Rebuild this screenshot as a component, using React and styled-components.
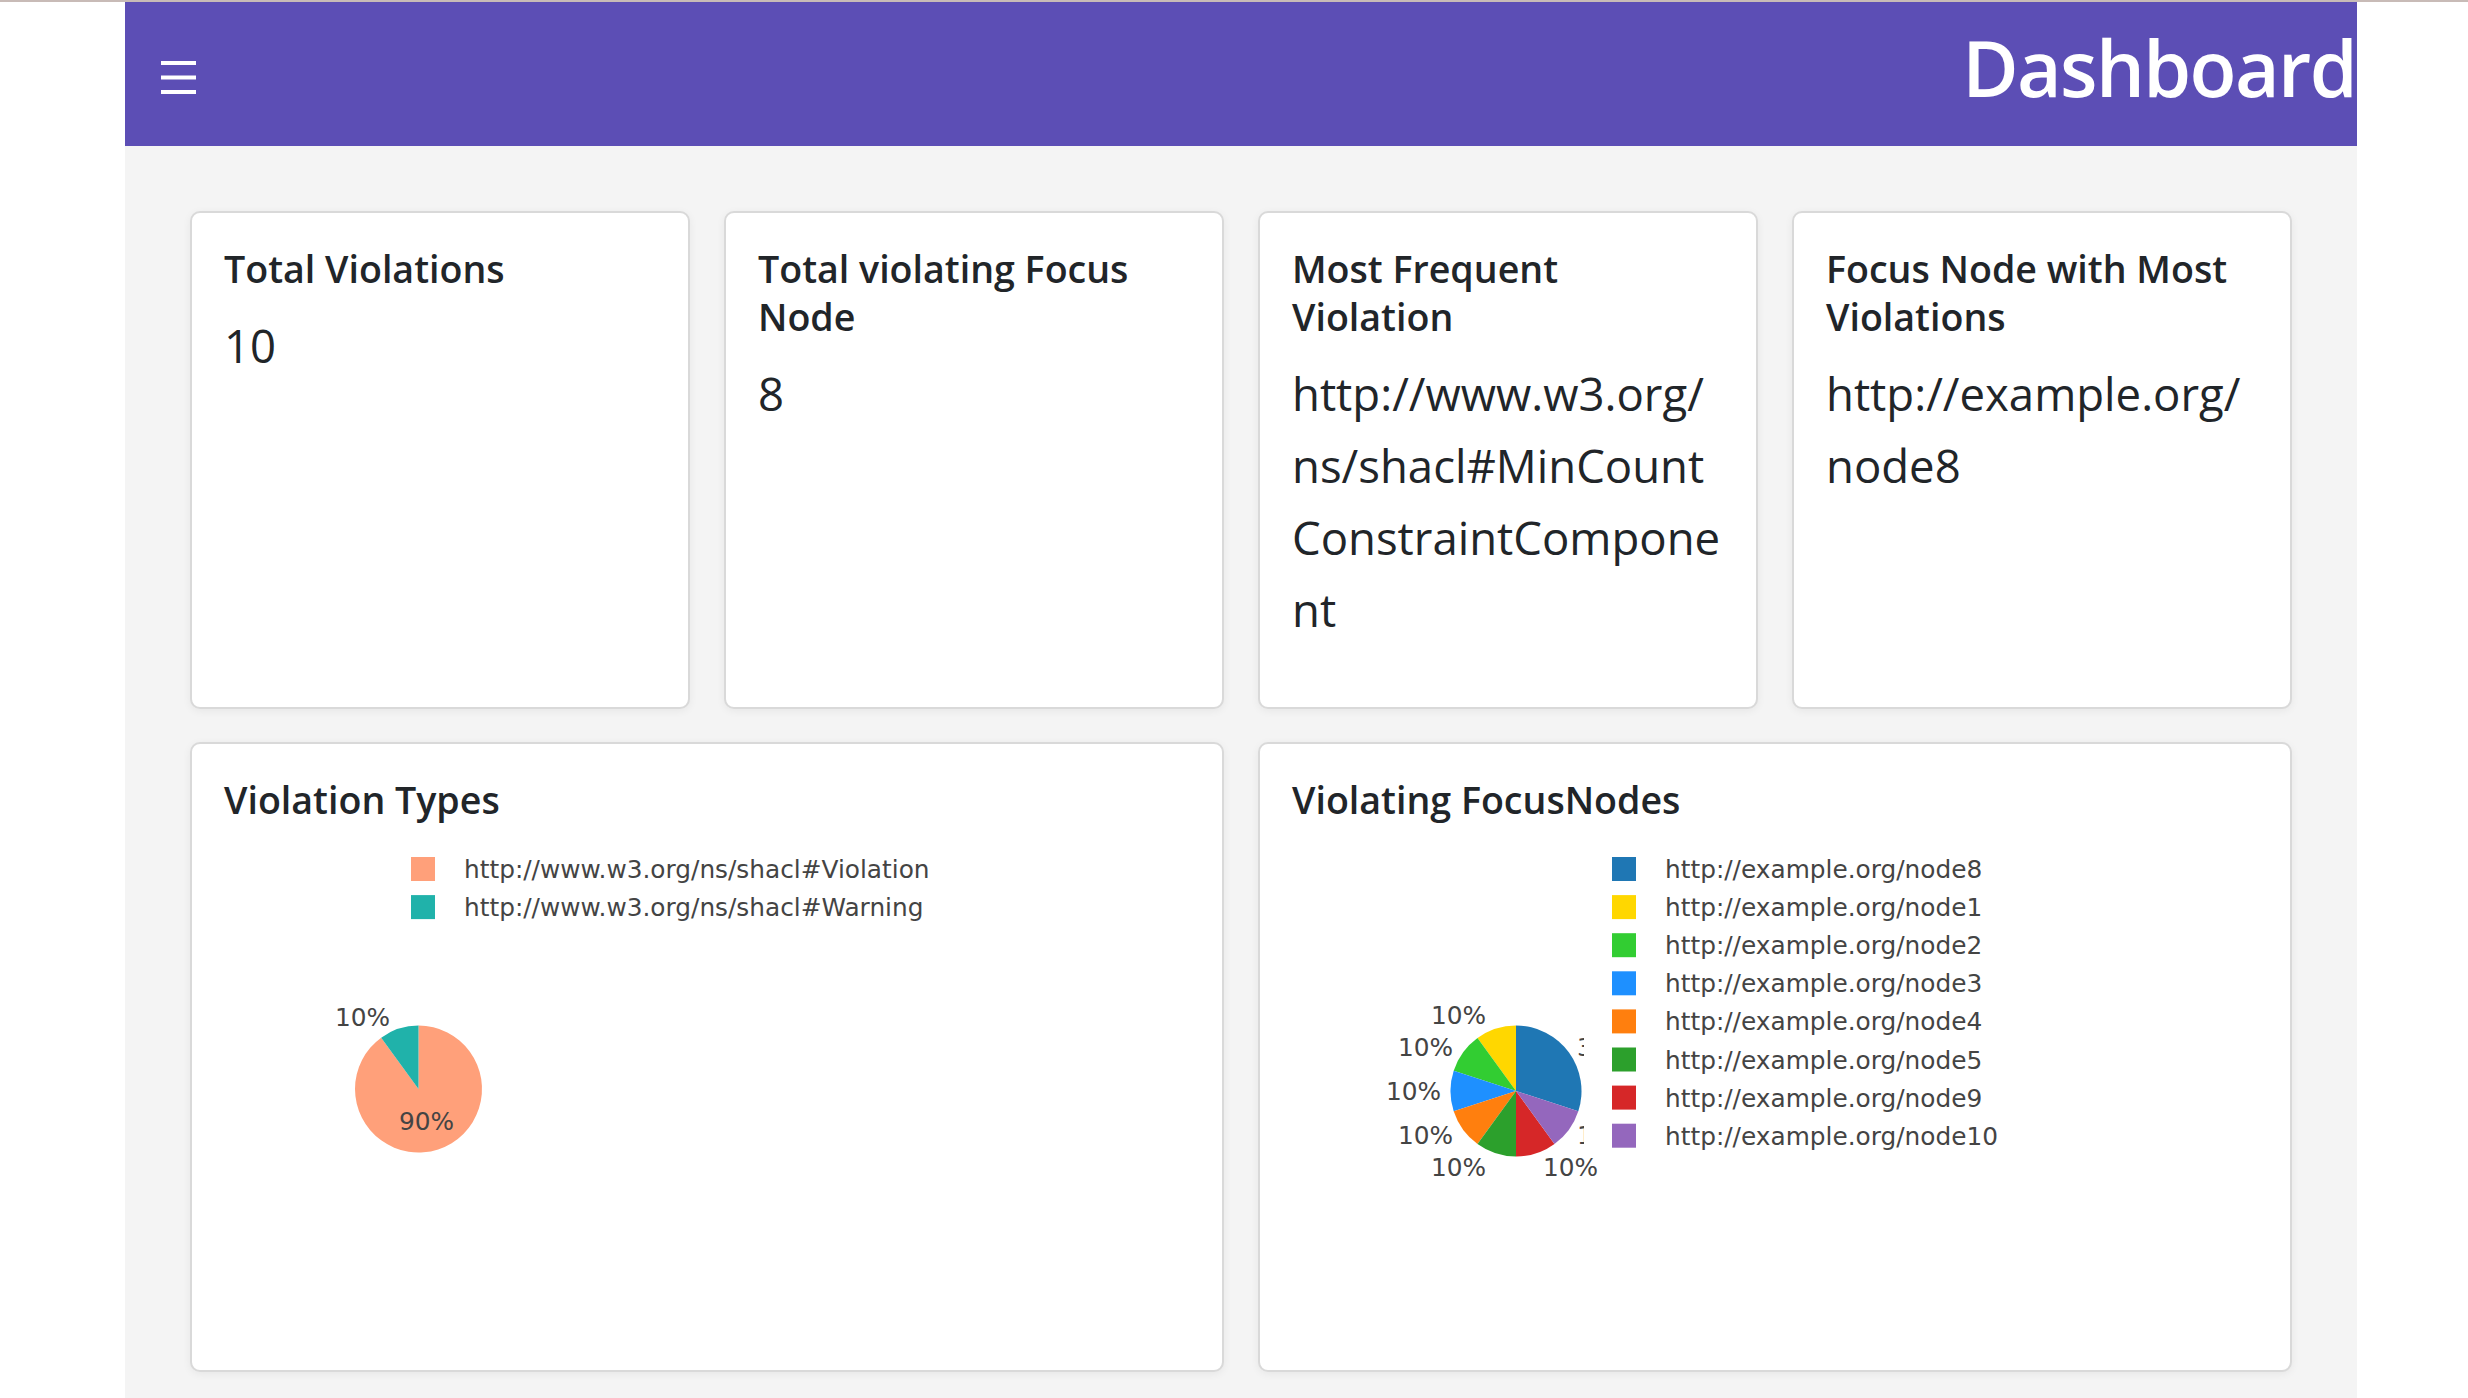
import React from 'react';
import styled, { createGlobalStyle } from 'styled-components';

const GlobalStyle = createGlobalStyle`
  html, body { margin: 0; padding: 0; }
  body {
    background: #ffffff;
    border-top: 2px solid #c8bbb7;
    font-family: "Open Sans", "Noto Sans", sans-serif;
    color: #212529;
  }
`;

const Page = styled.div`
  margin-left: 125px;
  width: 2232px;
  min-height: calc(100vh - 2px);
  background: #f4f4f4;
`;

const Header = styled.header`
  height: 144px;
  box-sizing: border-box;
  background: #5c4eb5;
  display: flex;
  align-items: center;
  justify-content: space-between;
  padding: 0 1px 0 36px;
`;

const MenuButton = styled.button`
  border: 0;
  background: none;
  padding: 0;
  margin-top: 6px;
  width: 36px;
  height: 33px;
  display: flex;
  cursor: pointer;
`;

const HeaderTitle = styled.h1`
  margin: 0 0 12px;
  font-size: 77px;
  line-height: 96px;
  font-weight: 600;
  color: #ffffff;
  letter-spacing: -1.6px;
`;

const Main = styled.main`
  padding: 65px 65px 24px;
  display: grid;
  grid-template-columns: repeat(4, 1fr);
  column-gap: 34px;
  row-gap: 33px;
`;

const Card = styled.section`
  grid-column: span ${p => p.$span || 1};
  height: ${p => (p.$tall ? 630 : 498)}px;
  box-sizing: border-box;
  background: #ffffff;
  border: 2px solid #d9d9d9;
  border-radius: 10px;
  box-shadow: 0 2px 8px rgba(0, 0, 0, 0.06);
  padding: 32px;
  overflow: hidden;
`;

const CardTitle = styled.h5`
  margin: 0 0 16px;
  font-size: 37.6px;
  line-height: 48px;
  font-weight: 600;
  color: #212529;
`;

const CardValue = styled.p`
  margin: 0;
  font-size: 45.5px;
  line-height: 72px;
  font-weight: 400;
  color: #212529;
  white-space: nowrap;
`;

const ChartSvg = styled.svg`
  display: block;
  width: 100%;
  height: 498px;
  font-family: "DejaVu Sans", Verdana, sans-serif;
  font-size: 24.8px;
`;

const rad = a => (a * Math.PI) / 180;
const pt = (cx, cy, r, a) => [cx + r * Math.sin(rad(a)), cy - r * Math.cos(rad(a))];
const slicePath = (cx, cy, r, a0, a1) => {
  const [x0, y0] = pt(cx, cy, r, a0);
  const [x1, y1] = pt(cx, cy, r, a1);
  const large = a1 - a0 > 180 ? 1 : 0;
  return `M${cx},${cy} L${x0},${y0} A${r},${r} 0 ${large} 1 ${x1},${y1} Z`;
};

function Pie({ cx, cy, r, slices }) {
  return (
    <g>
      {slices.map((s, i) => (
        <path key={i} d={slicePath(cx, cy, r, s.from, s.to)} fill={s.color} />
      ))}
    </g>
  );
}

function Legend({ x, items }) {
  return (
    <g>
      {items.map((it, i) => (
        <g key={it.label} transform={`translate(${x}, ${17 + i * 38.1})`}>
          <rect x="0" y="0" width="24" height="24" fill={it.color} />
          <text x="53" y="21" fill="#444">{it.label}</text>
        </g>
      ))}
    </g>
  );
}

function Labels({ items }) {
  return (
    <g fill="#444">
      {items.map((l, i) => (
        <text key={i} x={l.x} y={l.y}>{l.t}</text>
      ))}
    </g>
  );
}

const violationTypes = [
  { label: 'http://www.w3.org/ns/shacl#Violation', color: '#FFA07A' },
  { label: 'http://www.w3.org/ns/shacl#Warning', color: '#20B2AA' },
];

const focusNodes = [
  { label: 'http://example.org/node8', color: '#1F77B4' },
  { label: 'http://example.org/node1', color: '#FFD700' },
  { label: 'http://example.org/node2', color: '#32CD32' },
  { label: 'http://example.org/node3', color: '#1E90FF' },
  { label: 'http://example.org/node4', color: '#FF7F0E' },
  { label: 'http://example.org/node5', color: '#2CA02C' },
  { label: 'http://example.org/node9', color: '#D62728' },
  { label: 'http://example.org/node10', color: '#9467BD' },
];

const typeSlices = [
  { from: 0, to: 324, color: violationTypes[0].color },
  { from: 324, to: 360, color: violationTypes[1].color },
];

const nodeSlices = [
  { from: 0, to: 108, color: focusNodes[0].color },
  ...focusNodes.slice(1).map((n, i) => ({ from: 360 - 36 * (i + 1), to: 360 - 36 * i, color: n.color })),
];

const typeLabels = [
  { t: '10%', x: 111, y: 186 },
  { t: '90%', x: 175, y: 290 },
];

const nodeLabels = [
  { t: '10%', x: 139, y: 184 },
  { t: '10%', x: 106, y: 216 },
  { t: '10%', x: 94, y: 260 },
  { t: '10%', x: 106, y: 304 },
  { t: '10%', x: 139, y: 336 },
  { t: '10%', x: 251, y: 336 },
  { t: '30%', x: 285, y: 216 },
  { t: '10%', x: 285, y: 304 },
];

function MenuIcon() {
  return (
    <svg width="36" height="33" viewBox="0 0 36 33">
      <rect x="0" y="0" width="35" height="4" fill="#fff" />
      <rect x="0" y="14.5" width="35" height="4" fill="#fff" />
      <rect x="0" y="29" width="35" height="4" fill="#fff" />
    </svg>
  );
}

function Lines({ lines }) {
  return lines.map((l, i) => (
    <React.Fragment key={i}>
      {l}
      {i < lines.length - 1 && <br />}
    </React.Fragment>
  ));
}

export default function App() {
  return (
    <>
      <GlobalStyle />
      <Page>
        <Header>
          <MenuButton aria-label="menu">
            <MenuIcon />
          </MenuButton>
          <HeaderTitle>Dashboard</HeaderTitle>
        </Header>
        <Main>
          <Card>
            <CardTitle>Total Violations</CardTitle>
            <CardValue>10</CardValue>
          </Card>
          <Card>
            <CardTitle>Total violating Focus Node</CardTitle>
            <CardValue>8</CardValue>
          </Card>
          <Card>
            <CardTitle>Most Frequent Violation</CardTitle>
            <CardValue>
              <Lines lines={['http://www.w3.org/', 'ns/shacl#MinCount', 'ConstraintCompone', 'nt']} />
            </CardValue>
          </Card>
          <Card>
            <CardTitle>Focus Node with Most Violations</CardTitle>
            <CardValue>
              <Lines lines={['http://example.org/', 'node8']} />
            </CardValue>
          </Card>
          <Card $span={2} $tall>
            <CardTitle>Violation Types</CardTitle>
            <ChartSvg>
              <Pie cx={194.5} cy={249} r={63.5} slices={typeSlices} />
              <Labels items={typeLabels} />
              <Legend x={187} items={violationTypes} />
            </ChartSvg>
          </Card>
          <Card $span={2} $tall>
            <CardTitle>Violating FocusNodes</CardTitle>
            <ChartSvg>
              <Pie cx={224} cy={251} r={65.5} slices={nodeSlices} />
              <Labels items={nodeLabels} />
              <rect x="292" y="0" width="674" height="315" fill="#fff" />
              <Legend x={320} items={focusNodes} />
            </ChartSvg>
          </Card>
        </Main>
      </Page>
    </>
  );
}
